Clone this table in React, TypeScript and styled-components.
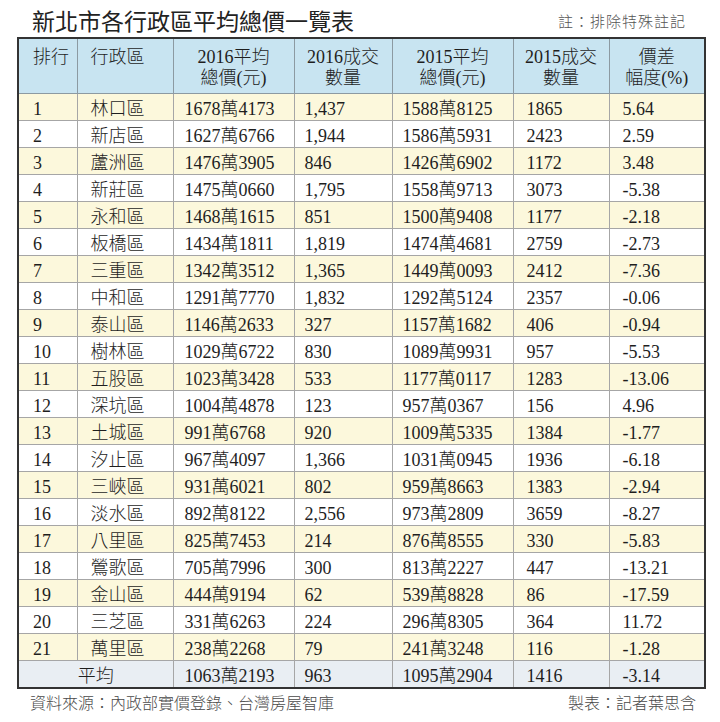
import React from "react";
import styled, { createGlobalStyle } from "styled-components";

const Global = createGlobalStyle`
  html, body { margin: 0; padding: 0; background: #ffffff; }
  #root { width: 720px; height: 722px; }
`;

const Page = styled.div`
  width: 720px;
  height: 722px;
  box-sizing: border-box;
  padding: 0 16px 0 17px;
  background: #fff;
  display: flex;
  flex-direction: column;
`;

const TopBar = styled.div`
  height: 37px;
  display: flex;
  align-items: flex-start;
  justify-content: space-between;
`;

const Title = styled.h1`
  margin: 6px 0 0 15px;
  font-family: "Noto Sans CJK TC", sans-serif;
  font-size: 23px;
  font-weight: 400;
  line-height: 28px;
  color: #222;
`;

const Note = styled.div`
  margin: 12px 18px 0 0;
  font-family: "Noto Sans CJK TC", sans-serif;
  font-size: 15px;
  font-weight: 300;
  letter-spacing: 1px;
  line-height: 18px;
  color: #555;
`;

const Table = styled.table`
  width: 687px;
  border-collapse: collapse;
  table-layout: fixed;
  border: 2px solid #333;
  font-family: "Liberation Serif", "Noto Sans CJK TC", serif;
  font-size: 18px;
  font-weight: 300;
  color: #1e1e1e;
`;

const HeadRow = styled.tr`
  height: 55px;
  background: #c8e4f1;
`;

const Th = styled.th<{ $align?: string; $pl?: number }>`
  font-weight: 300;
  vertical-align: top;
  text-align: ${(p) => p.$align || "center"};
  padding: 8px 0 0 ${(p) => p.$pl ?? 0}px;
  line-height: 21px;
  border-left: 1px solid #8c9aa2;
  border-right: 1px solid #8c9aa2;
  border-bottom: 1px solid #8c9aa2;
`;

const Row = styled.tr<{ $tone: "yellow" | "white" | "avg" }>`
  height: 27px;
  background: ${(p) =>
    p.$tone === "yellow" ? "#fcf8dc" : p.$tone === "avg" ? "#e9eef3" : "#ffffff"};
`;

const Td = styled.td<{ $pl?: number; $center?: boolean }>`
  padding: 4px 0 0 ${(p) => p.$pl ?? 11}px;
  text-align: ${(p) => (p.$center ? "center" : "left")};
  line-height: 22px;
  white-space: nowrap;
  border: 1px solid #a6a6a6;
`;

const Footer = styled.div`
  display: flex;
  justify-content: space-between;
  padding: 3px 8px 0 13px;
  font-family: "Noto Sans CJK TC", sans-serif;
  font-size: 16px;
  font-weight: 300;
  line-height: 20px;
  color: #4a4a4a;
`;

const rows: [string, string, string, string, string, string][] = [
  ["林口區", "1678萬4173", "1,437", "1588萬8125", "1865", "5.64"],
  ["新店區", "1627萬6766", "1,944", "1586萬5931", "2423", "2.59"],
  ["蘆洲區", "1476萬3905", "846", "1426萬6902", "1172", "3.48"],
  ["新莊區", "1475萬0660", "1,795", "1558萬9713", "3073", "-5.38"],
  ["永和區", "1468萬1615", "851", "1500萬9408", "1177", "-2.18"],
  ["板橋區", "1434萬1811", "1,819", "1474萬4681", "2759", "-2.73"],
  ["三重區", "1342萬3512", "1,365", "1449萬0093", "2412", "-7.36"],
  ["中和區", "1291萬7770", "1,832", "1292萬5124", "2357", "-0.06"],
  ["泰山區", "1146萬2633", "327", "1157萬1682", "406", "-0.94"],
  ["樹林區", "1029萬6722", "830", "1089萬9931", "957", "-5.53"],
  ["五股區", "1023萬3428", "533", "1177萬0117", "1283", "-13.06"],
  ["深坑區", "1004萬4878", "123", "957萬0367", "156", "4.96"],
  ["土城區", "991萬6768", "920", "1009萬5335", "1384", "-1.77"],
  ["汐止區", "967萬4097", "1,366", "1031萬0945", "1936", "-6.18"],
  ["三峽區", "931萬6021", "802", "959萬8663", "1383", "-2.94"],
  ["淡水區", "892萬8122", "2,556", "973萬2809", "3659", "-8.27"],
  ["八里區", "825萬7453", "214", "876萬8555", "330", "-5.83"],
  ["鶯歌區", "705萬7996", "300", "813萬2227", "447", "-13.21"],
  ["金山區", "444萬9194", "62", "539萬8828", "86", "-17.59"],
  ["三芝區", "331萬6263", "224", "296萬8305", "364", "11.72"],
  ["萬里區", "238萬2268", "79", "241萬3248", "116", "-1.28"],
];

export default function App() {
  return (
    <Page>
      <Global />
      <TopBar>
        <Title>新北市各行政區平均總價一覽表</Title>
        <Note>註：排除特殊註記</Note>
      </TopBar>
      <Table>
        <colgroup>
          <col style={{ width: 59 }} />
          <col style={{ width: 96 }} />
          <col style={{ width: 121 }} />
          <col style={{ width: 98 }} />
          <col style={{ width: 121 }} />
          <col style={{ width: 96 }} />
          <col style={{ width: 96 }} />
        </colgroup>
        <thead>
          <HeadRow>
            <Th $align="left" $pl={14}>排行</Th>
            <Th $align="left" $pl={13}>行政區</Th>
            <Th>
              2016平均
              <br />
              總價(元)
            </Th>
            <Th>
              2016成交
              <br />
              數量
            </Th>
            <Th>
              2015平均
              <br />
              總價(元)
            </Th>
            <Th>
              2015成交
              <br />
              數量
            </Th>
            <Th>
              價差
              <br />
              幅度(%)
            </Th>
          </HeadRow>
        </thead>
        <tbody>
          {rows.map((r, i) => (
            <Row key={i} $tone={i % 2 === 0 ? "yellow" : "white"}>
              <Td $pl={14}>{i + 1}</Td>
              <Td $pl={13}>{r[0]}</Td>
              <Td>{r[1]}</Td>
              <Td $pl={10}>{r[2]}</Td>
              <Td $pl={10}>{r[3]}</Td>
              <Td $pl={13}>{r[4]}</Td>
              <Td $pl={13}>{r[5]}</Td>
            </Row>
          ))}
          <Row $tone="avg">
            <Td colSpan={2} $center $pl={0}>
              平均
            </Td>
            <Td>1063萬2193</Td>
            <Td $pl={10}>963</Td>
            <Td $pl={10}>1095萬2904</Td>
            <Td $pl={13}>1416</Td>
            <Td $pl={13}>-3.14</Td>
          </Row>
        </tbody>
      </Table>
      <Footer>
        <span>資料來源：內政部實價登錄、台灣房屋智庫</span>
        <span>製表：記者葉思含</span>
      </Footer>
    </Page>
  );
}
